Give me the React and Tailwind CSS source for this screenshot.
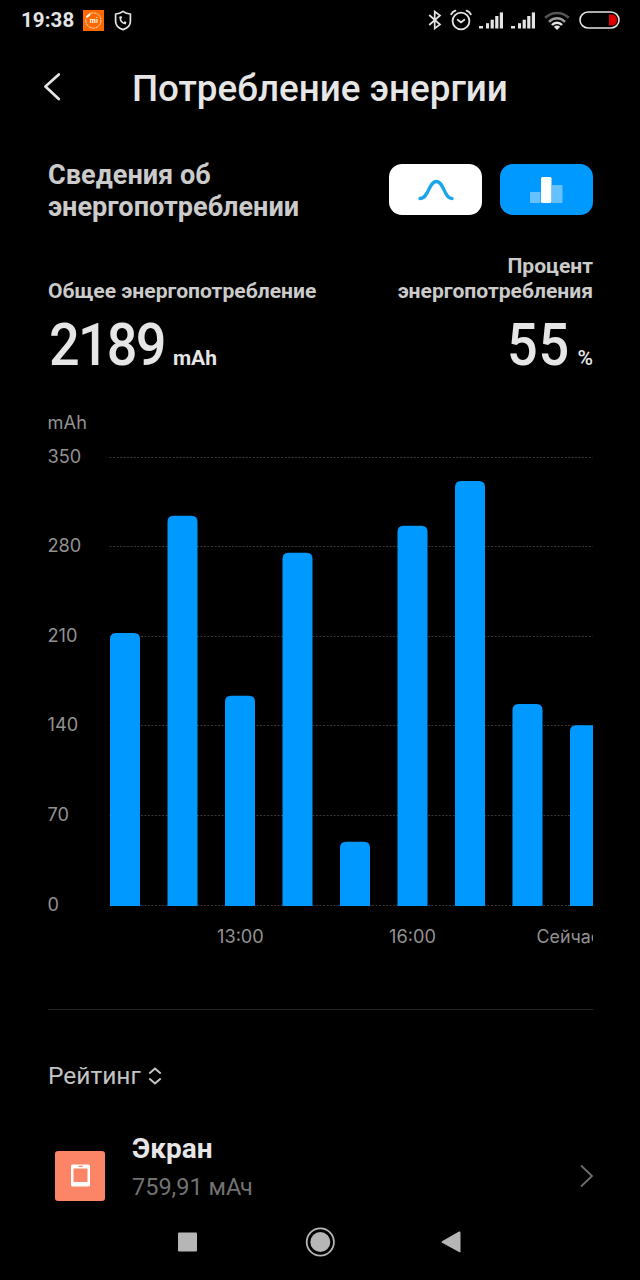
const ticks = [
  { label: "350", y: 57.5 },
  { label: "280", y: 146.5 },
  { label: "210", y: 236.5 },
  { label: "140", y: 325.5 },
  { label: "70", y: 415.5 },
  { label: "0", y: 505.5 },
];

// top edge of every bar, all of them stand on y = 506
const bars = [233, 115.7, 295.7, 152.7, 441.7, 125.7, 81, 304, 325.3];

function SignalIcon() {
  return (
    <svg width="24" height="17" viewBox="0 0 24 17" fill="#e4e4e4">
      <rect x="0" y="14" width="4" height="2.5" />
      <rect x="7" y="11.2" width="3" height="5.3" />
      <rect x="11.6" y="7.7" width="3.2" height="8.8" />
      <rect x="16.2" y="4" width="3.2" height="12.5" />
      <rect x="20.8" y="0.4" width="3.2" height="16.1" />
    </svg>
  );
}

function StatusBar() {
  return (
    <div className="flex h-10 shrink-0 items-center justify-between pr-[20px] pl-[21px]">
      <div className="flex items-center">
        <span className="w-[61.5px] text-[20.5px] leading-10 font-bold tracking-[0.1px] text-[#e4e4e4]">
          19:38
        </span>
        <svg width="21" height="21" viewBox="0 0 21 21">
          <rect width="21" height="21" fill="#ff6900" />
          <path
            d="M7.2 3.6A7.6 7.6 0 1 1 3 8.8"
            fill="none"
            stroke="#ffd9bd"
            strokeWidth="1"
            strokeDasharray="3 0.6"
          />
          <path d="M4 6.8L6.6 4.4" stroke="#fff" strokeWidth="2" strokeLinecap="round" />
          <text
            x="10.8"
            y="13"
            textAnchor="middle"
            fontSize="7"
            fontWeight="700"
            fill="#fff"
          >
            mi
          </text>
        </svg>
        <svg
          className="ml-[10px]"
          width="18"
          height="21"
          viewBox="0 0 18 21"
          fill="none"
          stroke="#e4e4e4"
          strokeWidth="1.7"
        >
          <path
            d="M9 1.4C7 3 4.3 3.9 1.6 4V11.4C1.6 15.4 5 18.2 9 19.6C13 18.2 16.4 15.4 16.4 11.4V4C13.7 3.9 11 3 9 1.4Z"
            strokeLinejoin="round"
          />
          <path d="M6.3 6.7C6 10.2 8 13 11.6 13.7" strokeWidth="1.5" />
          <path d="M6.3 6.5L7.2 8.5M10 12.4L12 13.2" strokeWidth="2.4" />
        </svg>
      </div>
      <div className="flex items-center">
        <svg
          width="14"
          height="20"
          viewBox="0 0 14 20"
          fill="none"
          stroke="#e4e4e4"
          strokeWidth="1.7"
        >
          <path d="M1.2 5L12 14.5L6.7 18.5V1.5L12 5.5L1.2 15" />
        </svg>
        <svg
          className="ml-[8px]"
          width="22"
          height="22"
          viewBox="0 0 22 22"
          fill="none"
          stroke="#e4e4e4"
          strokeWidth="1.8"
          strokeLinecap="round"
        >
          <circle cx="11" cy="12" r="8.4" />
          <path d="M7.7 10.8L11 13.3L14.4 10.8" />
          <path d="M1.2 5.2Q2.6 2.7 5.4 1.6M16.6 1.6Q19.4 2.7 20.8 5.2" />
        </svg>
        <div className="ml-[7px] flex gap-[8px]">
          <SignalIcon />
          <SignalIcon />
        </div>
        <svg
          className="mt-[1px] ml-[9px]"
          width="26"
          height="20"
          viewBox="0 0 26 20"
          fill="none"
          strokeWidth="2.6"
        >
          <path d="M1.2 6.8Q6.5 2 13 2T24.8 6.8" stroke="#555" />
          <path d="M5 10.8Q8.5 7.3 13 7.3T21 10.8" stroke="#999" />
          <path d="M8 14Q10 11.8 13 11.8T18 14" stroke="#e4e4e4" />
          <path d="M9.8 15.8Q13 13.4 16.2 15.8L13 19Z" fill="#e4e4e4" />
        </svg>
        <svg className="ml-[9px]" width="41" height="18" viewBox="0 0 41 18">
          <path d="M30 3.5H33.5Q38 4.5 38 9T33.5 14.5H30Z" fill="#e00000" />
          <rect
            x="1"
            y="1"
            width="39"
            height="16"
            rx="8"
            fill="none"
            stroke="#e4e4e4"
            strokeWidth="1.6"
          />
        </svg>
      </div>
    </div>
  );
}

function Header() {
  return (
    <header className="flex h-24 shrink-0 items-center pl-[43px]">
      <svg
        className="mb-[2px]"
        width="20"
        height="30"
        viewBox="0 0 20 30"
        fill="none"
        stroke="#e4e4e4"
        strokeWidth="2.7"
        strokeLinecap="round"
        strokeLinejoin="round"
      >
        <path d="M15.8 2.5L2.4 14.5L15.8 27" />
      </svg>
      <h1 className="ml-[69px] pt-[1px] text-[36.8px] font-medium whitespace-nowrap text-[#e6e6e6]">
        Потребление энергии
      </h1>
    </header>
  );
}

function ViewSwitch() {
  return (
    <div className="flex gap-[18px] pt-[5px]">
      <button
        type="button"
        className="flex h-[51px] w-[93px] items-center justify-center rounded-[13px] bg-white"
      >
        <svg width="36" height="22" viewBox="0 0 36 22" fill="none">
          <path
            d="M2 19.5C11 19.5 10.5 2.5 18.3 2.5S26 19.5 34 19.5"
            stroke="#1ba5ea"
            strokeWidth="3.3"
            strokeLinecap="round"
          />
        </svg>
      </button>
      <button
        type="button"
        className="flex h-[51px] w-[93px] items-center justify-center rounded-[13px] bg-[#0099ff]"
      >
        <svg width="33" height="26" viewBox="0 0 33 26" fill="#fff">
          <rect x="0" y="15" width="10.5" height="11" rx="1" opacity="0.4" />
          <rect x="11" y="0" width="10.5" height="26" rx="1.5" />
          <rect x="22" y="8" width="10.5" height="18" rx="1" opacity="0.4" />
        </svg>
      </button>
    </div>
  );
}

function UsageChart() {
  return (
    <svg
      className="block font-[Inter,sans-serif]"
      width="545"
      height="560"
      viewBox="0 0 545 560"
      fontSize="18.2"
      fill="#929292"
    >
      <text x="-0.5" y="29" textLength="39.5">
        mAh
      </text>
      {ticks.map((t) => (
        <g key={t.label}>
          <text x="-0.5" y={t.y + 5.5}>
            {t.label}
          </text>
          <path
            d={`M61.5 ${t.y}H545`}
            stroke="#383838"
            strokeWidth="1"
            strokeDasharray="2 1.5"
          />
        </g>
      ))}
      {bars.map((top, i) => {
        const x = 62 + i * 57.5;
        return (
          <path
            key={i}
            d={`M${x} 506V${top + 6}q0 -6 6 -6h18q6 0 6 6V506Z`}
            fill="#0099ff"
          />
        );
      })}
      <text x="169" y="543">
        13:00
      </text>
      <text x="341" y="543">
        16:00
      </text>
      <text x="488.5" y="543" textLength="64.5" lengthAdjust="spacingAndGlyphs">
        Сейчас
      </text>
    </svg>
  );
}

function NavBar() {
  return (
    <nav className="flex h-[77px] shrink-0 items-center justify-center">
      <svg width="284" height="30" viewBox="0 0 284 30" fill="#b6b6b6">
        <rect x="0" y="5.5" width="19" height="19" rx="1" />
        <circle cx="142.3" cy="15" r="13.6" fill="none" stroke="#b6b6b6" strokeWidth="1.8" />
        <circle cx="142.3" cy="15" r="10" />
        <path d="M264 14.2L281 4.5Q282.5 4 282.5 5.5V24.5Q282.5 26 281 25L264 15.8Q263 15 264 14.2Z" />
      </svg>
    </nav>
  );
}

export default function App() {
  return (
    <main className="flex h-[1280px] w-[640px] flex-col overflow-hidden bg-black font-[Roboto,sans-serif] text-[#cbcbcb]">
      <StatusBar />
      <Header />

      <section className="min-h-0 flex-1 px-12 pt-[23px]">
        <div className="flex w-[545px] items-start justify-between">
          <h2 className="text-[27.1px] leading-8 font-bold">
            Сведения об
            <br />
            энергопотреблении
          </h2>
          <ViewSwitch />
        </div>

        <div className="mt-[30px] flex w-[545px] items-end justify-between font-bold">
          <div>
            <p className="text-[21.1px] leading-[25px]">Общее энергопотребление</p>
            <p className="mt-[6px] flex items-baseline text-[#e6e6e6]">
              <span className="ml-[1px] inline-block origin-left scale-x-90 text-[60px] leading-[72px] font-medium tracking-[-2px]">
                2189
              </span>
              <span className="-ml-[4.5px] text-[21px]">mAh</span>
            </p>
          </div>
          <div className="flex flex-col items-end text-right">
            <p className="text-[21.1px] leading-[25px]">
              Процент
              <br />
              энергопотребления
            </p>
            <p className="mt-[6px] flex items-baseline text-[#e6e6e6]">
              <span className="inline-block origin-right scale-x-90 text-[60px] leading-[72px] font-medium tracking-[1px]">
                55
              </span>
              <span className="ml-[7px] text-[21px] font-medium">%</span>
            </p>
          </div>
        </div>

        <div className="mt-[19px]">
          <UsageChart />
        </div>

        <hr className="mt-[49px] w-[545px] border-[#262626]" />

        <div className="mt-[50px] flex h-8 items-center text-[24.5px]">
          <span className="text-[#c4c4c4]">Рейтинг</span>
          <svg
            className="ml-[7px]"
            width="14"
            height="18"
            viewBox="0 0 14 18"
            fill="none"
            stroke="#c4c4c4"
            strokeWidth="2"
          >
            <path d="M1.3 6.5L7 1.5L12.7 6.5M1.3 11.5L7 16.5L12.7 11.5" />
          </svg>
        </div>

        <div className="mt-[38px] flex w-[546px] items-center pl-[7px]">
          <div className="mt-[15px] flex size-[50px] items-center justify-center rounded-[3px] bg-[#fd8567]">
            <svg width="19" height="23" viewBox="0 0 19 23">
              <rect x="0" y="0.5" width="19" height="22" rx="1.5" fill="#fff" />
              <rect x="2.5" y="4.5" width="14" height="13.5" fill="#fd8567" />
              <path d="M7.5 2.3H12" stroke="#fd8567" strokeWidth="1.2" />
            </svg>
          </div>
          <div className="ml-[27px] flex-1">
            <p className="text-[28px] leading-[38px] font-bold text-[#e6e6e6]">Экран</p>
            <p className="text-[23.5px] leading-[38px] text-[#727272]">759,91 мАч</p>
          </div>
          <svg
            className="mt-[15px]"
            width="15"
            height="24"
            viewBox="0 0 15 24"
            fill="none"
            stroke="#6e6e6e"
            strokeWidth="1.8"
          >
            <path d="M2 1.5L13 12L2 22.5" />
          </svg>
        </div>
      </section>

      <NavBar />
    </main>
  );
}
